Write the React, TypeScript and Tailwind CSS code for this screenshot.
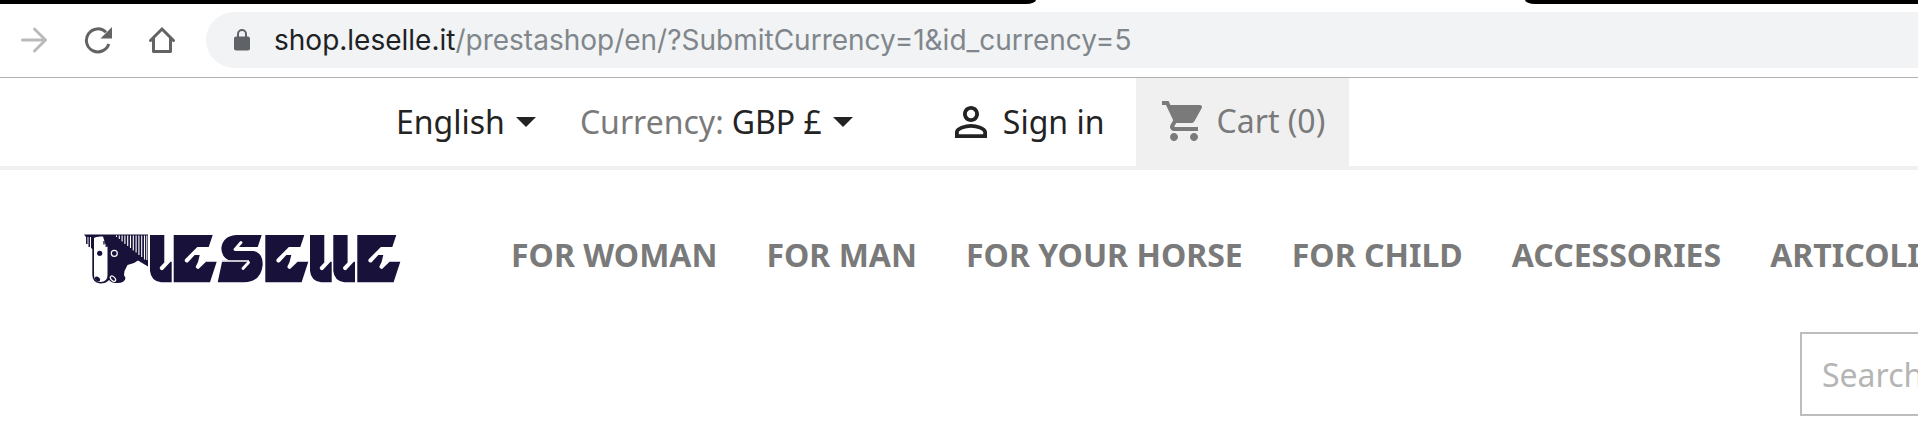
interface Category {
  label: string;
  href: string;
}

const categories: Category[] = [
  { label: "For woman", href: "#woman" },
  { label: "For man", href: "#man" },
  { label: "For your horse", href: "#horse" },
  { label: "For child", href: "#child" },
  { label: "Accessories", href: "#accessories" },
  { label: "Articoli", href: "#articoli" },
];

function ForwardIcon() {
  return (
    <svg
      width="28"
      height="28"
      viewBox="0 0 28 28"
      fill="none"
      stroke="#bababa"
      strokeWidth="3"
      strokeLinecap="round"
      strokeLinejoin="round"
      aria-hidden="true"
    >
      <path d="M2.500 14H25.500M14.500 3L25.500 14L14.500 25" />
    </svg>
  );
}

function ReloadIcon() {
  return (
    <svg width="28" height="28" viewBox="0 0 28 28" fill="none" aria-hidden="true">
      <path d="M24.800 18A11.500 11.500 0 1 1 22 6.200" stroke="#636363" strokeWidth="3" />
      <path d="M28 1v11.500H16.500z" fill="#636363" />
    </svg>
  );
}

function HomeIcon() {
  return (
    <svg width="28" height="28" viewBox="0 0 28 28" fill="none" aria-hidden="true">
      <path
        d="M2.500 14.500L14 3L25.500 14.500"
        stroke="#636363"
        strokeWidth="3"
        strokeLinecap="round"
      />
      <path d="M5.500 12v13.500h17V12" stroke="#636363" strokeWidth="3" strokeLinejoin="round" />
    </svg>
  );
}

function LockIcon() {
  return (
    <svg width="16" height="22" viewBox="0 0 16 22" aria-hidden="true">
      <path d="M4 8V5a4 4 0 0 1 8 0v3" fill="none" stroke="#5f6368" strokeWidth="2" />
      <rect y="7.500" width="16" height="14" rx="2" fill="#5f6368" />
    </svg>
  );
}

function PersonIcon() {
  return (
    <svg className="size-12" viewBox="0 0 24 24" fill="currentColor" aria-hidden="true">
      <path d="M12 5.900a2.100 2.100 0 1 1 0 4.200 2.100 2.100 0 0 1 0-4.200m0 9c2.970 0 6.100 1.460 6.100 2.100v1.100H5.900V17c0-.64 3.130-2.100 6.100-2.100M12 4C9.790 4 8 5.790 8 8s1.790 4 4 4 4-1.790 4-4-1.790-4-4-4zm0 9c-2.670 0-8 1.340-8 4v3h16v-3c0-2.660-5.330-4-8-4z" />
    </svg>
  );
}

function CartIcon() {
  return (
    <svg className="size-12" viewBox="0 0 24 24" fill="currentColor" aria-hidden="true">
      <path d="M7 18c-1.100 0-1.990.9-1.990 2S5.900 22 7 22s2-.9 2-2-.9-2-2-2zM1 2v2h2l3.600 7.590-1.350 2.450c-.16.28-.25.610-.25.960 0 1.100.9 2 2 2h12v-2H7.420c-.14 0-.25-.11-.25-.25l.03-.12.900-1.630h7.450c.75 0 1.410-.41 1.750-1.030l3.580-6.490A1.003 1.003 0 0 0 20 4H5.210l-.94-2H1zm16 16c-1.100 0-1.990.9-1.990 2s.89 2 1.990 2 2-.9 2-2-.9-2-2-2z" />
    </svg>
  );
}

function CaretIcon() {
  return (
    <svg width="20" height="10" viewBox="0 0 20 10" fill="currentColor" aria-hidden="true">
      <path d="M0 0h20L10 10z" />
    </svg>
  );
}

function Logo() {
  return (
    <svg width="318" height="50" viewBox="0 0 318 50" fill="#18123a" role="img" aria-label="Leselle">
      {/* horse head */}
      <path d="M0 .5H64V32.500L54 26.500L50 29L43.500 31L40.500 37L40 41L41.500 44Q41 49 33 49Q28 49.500 25 46Q22 49.500 16 49.500Q8.500 48.500 8.300 41V15L7 14V3H2z" />
      <path d="M10 4Q12 2 19 2.500L21 9L23.500 13V41Q23.500 48 16.500 48Q10 47.500 10 41z" fill="#fff" />
      <path d="M2.800 1v9M5.200 1v12" stroke="#18123a" strokeWidth="1.500" />
      <path d="M20 7v3.500M22.200 8v5" stroke="#18123a" strokeWidth="1.300" />
      <circle cx="15.700" cy="19.300" r="2.600" />
      <circle cx="30.300" cy="19.300" r="3" fill="none" stroke="#fff" strokeWidth="1.200" />
      <ellipse cx="13.500" cy="45" rx="3" ry="2" transform="rotate(35 13.500 45)" />
      <ellipse
        cx="29"
        cy="44.700"
        rx="3.200"
        ry="1.900"
        transform="rotate(45 29 44.700)"
        fill="none"
        stroke="#fff"
        strokeWidth="1.200"
      />
      <path
        d="M32.500 1.500V3M35.300 1.500V5M38.100 1.500V7.500M40.900 1.500V10M43.700 1.500V12M46.500 1.500V14M49.300 1.500V16.500M52.100 1.500V18.500M54.900 1.500V21M57.700 1.500V23M60.500 1.500V25.500M62.800 1.500V26"
        stroke="#fff"
        strokeWidth="1.100"
      />
      {/* lettering */}
      <path
        id="logo-l"
        d="M66 1H80.300V28.500L76.500 32.500A2 2 0 0 0 79.300 35.500L86.500 27.800H87.700V48.300H77Q67 47 66 37z"
      />
      <path
        id="logo-e"
        d="M89.700 1H128.700L124.700 13H113.300L101.300 25A2 2 0 0 0 104.500 27.700L110.700 21H115.700L114 28L112.300 31.500A2 2 0 0 0 115.500 34L122 27.700H132.700L126 48.300H89.700z"
      />
      <path d="M152 1H177.700L173.700 13H153L151 17H169Q178.700 18 178.700 31Q177 48 160 48.300H133.700L138 28V26.500H146Q137.500 24 137.300 14Q139 2 152 1z" />
      <path
        d="M151 15.500L157 8.500M164.500 28.500L159 34.500"
        stroke="#fff"
        strokeWidth="2.800"
        strokeLinecap="round"
      />
      <path d="M137 27H165" stroke="#fff" strokeWidth="1.500" />
      <use href="#logo-e" x="91.600" />
      <use href="#logo-l" x="160" />
      <use href="#logo-l" x="183.300" />
      <use href="#logo-e" x="183.600" />
    </svg>
  );
}

function BrowserBar() {
  return (
    <div className="border-b border-[#b0b0b0] bg-white">
      <div className="flex h-1 justify-between">
        <div className="w-[54%] rounded-br-[10px_4px] bg-black" />
        <div className="w-[20.5%] rounded-bl-[10px_4px] bg-black" />
      </div>
      <div className="flex items-center gap-9 pt-2 pb-[9px] pl-5">
        <button type="button" aria-label="Forward">
          <ForwardIcon />
        </button>
        <button type="button" aria-label="Reload">
          <ReloadIcon />
        </button>
        <button type="button" aria-label="Home">
          <HomeIcon />
        </button>
        <div className="-ml-1.5 flex h-14 flex-1 items-center gap-6 rounded-l-full bg-[#f1f3f4] pl-7">
          <LockIcon />
          <p className="font-[Inter,sans-serif] text-[28px] text-[#80868b]">
            <span className="text-[#202124]">shop.leselle.it</span>
            /prestashop/en/?SubmitCurrency=1&amp;id_currency=5
          </p>
        </div>
      </div>
    </div>
  );
}

function TopNav() {
  return (
    <nav className="flex h-[92px] items-center border-b-4 border-[#f0f0f0] pl-[396px] text-[#232323]">
      <button type="button" className="flex items-center gap-[11px]">
        English
        <CaretIcon />
      </button>
      <span id="currency-label" className="ml-11 text-[#7a7a7a]">
        Currency:
      </span>
      <button type="button" aria-describedby="currency-label" className="ml-2 flex items-center gap-[11px]">
        GBP £
        <CaretIcon />
      </button>
      <a href="#login" className="ml-[94px] flex items-center gap-2">
        <PersonIcon />
        Sign in
      </a>
      <a href="#cart" className="ml-8 flex h-full items-center gap-2 bg-[#f0f0f0] px-6 pb-0.5 text-[#7a7a7a]">
        <CartIcon />
        Cart (0)
      </a>
    </nav>
  );
}

export default function App() {
  return (
    <div className="overflow-hidden bg-white font-['Noto_Sans',sans-serif] text-[32px] leading-10 whitespace-nowrap">
      <BrowserBar />
      <TopNav />
      <header className="pt-16 pb-[26px] pl-[84px]">
        <div className="flex items-center">
          <a href="#home" className="shrink-0">
            <Logo />
          </a>
          <ul className="ml-[109px] flex gap-[49px] pb-2 font-bold text-[#7a7a7a] uppercase">
            {categories.map((category) => (
              <li key={category.href}>
                <a href={category.href}>{category.label}</a>
              </li>
            ))}
          </ul>
        </div>
        <form className="mt-12 flex justify-end">
          <input
            type="search"
            aria-label="Search"
            placeholder="Search"
            className="-mr-60 h-[84px] w-[358px] border-2 border-[#bdbdbd] px-5 placeholder:text-[#b5b5b5]"
          />
        </form>
      </header>
    </div>
  );
}
